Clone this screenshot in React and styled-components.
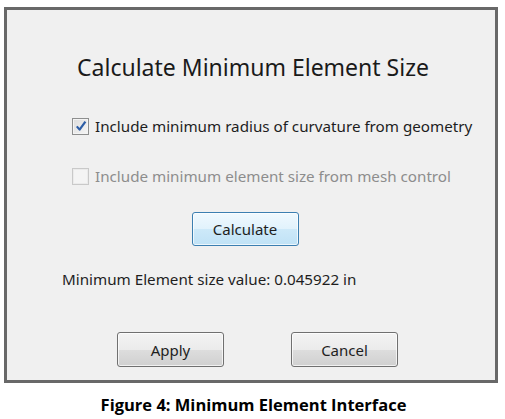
import styled, { createGlobalStyle } from 'styled-components'

const GlobalStyle = createGlobalStyle`
  body {
    margin: 0;
    background: #ffffff;
    font-family: 'Noto Sans', 'Open Sans', sans-serif;
  }
`

const Page = styled.div`
  width: 505px;
  height: 419px;
  display: flex;
  flex-direction: column;
  padding: 7px 0 0 4px;
  box-sizing: border-box;
`

const Panel = styled.div`
  width: 494px;
  height: 376px;
  box-sizing: border-box;
  border: 3px solid #686868;
  background: #f0f0f0;
  display: flex;
  flex-direction: column;
  padding-top: 41px;
`

const Title = styled.div`
  text-align: center;
  font-size: 23px;
  line-height: 32px;
  color: #1a1a1a;
  padding-left: 4px;
  margin-bottom: 33px;
`

const CheckRow = styled.label`
  display: flex;
  align-items: center;
  gap: 6px;
  padding-left: 65px;
  height: 20px;
  margin-bottom: ${(p) => p.gap}px;
  font-size: 15.2px;
  color: ${(p) => (p.disabled ? '#8d8d8d' : '#1e1e1e')};
`

const Box = styled.span`
  width: 17px;
  height: 17px;
  box-sizing: border-box;
  border: 1px solid ${(p) => (p.disabled ? '#c9c9c9' : '#8e8f8f')};
  background: ${(p) =>
    p.disabled
      ? '#f4f4f4'
      : 'linear-gradient(135deg, #dcdcdc, #f6f6f6)'};
  box-shadow: inset 0 0 0 1px ${(p) => (p.disabled ? '#ebebeb' : '#f4f4f4')};
  display: flex;
  align-items: center;
  justify-content: center;
`

const CalcWrap = styled.div`
  display: flex;
  justify-content: center;
  padding-right: 12px;
  margin-bottom: 23px;
`

const Button = styled.button`
  width: ${(p) => p.w}px;
  height: ${(p) => p.h}px;
  border-radius: 3px;
  font-family: 'Noto Sans', 'Open Sans', sans-serif;
  font-size: 15px;
  color: #1e1e1e;
  padding: 0;
  border: 1px solid ${(p) => (p.primary ? '#3c7fb1' : '#707070')};
  background: ${(p) =>
    p.primary
      ? 'linear-gradient(#f0f9fe, #e1f2fc 50%, #cde9f9 51%, #c0e2f6)'
      : 'linear-gradient(#f3f3f3, #ebebeb 50%, #dddddd 51%, #d0d0d0)'};
  box-shadow: inset 0 0 0 1px rgba(255, 255, 255, 0.7);
`

const ValueText = styled.div`
  padding-left: 55px;
  font-size: 15.2px;
  line-height: 20px;
  color: #1e1e1e;
  margin-bottom: 43px;
`

const ButtonRow = styled.div`
  display: flex;
  gap: 67px;
  padding-left: 110px;
`

const Caption = styled.div`
  text-align: center;
  font-family: 'Open Sans', 'Liberation Sans', sans-serif;
  font-weight: 700;
  font-size: 16.5px;
  color: #000;
  margin-top: 10px;
  padding-right: 2px;
`

function Check({ checked, disabled, children, gap }) {
  return (
    <CheckRow disabled={disabled} gap={gap}>
      <Box disabled={disabled}>
        {checked && (
          <svg width="12" height="12" viewBox="0 0 12 12">
            <path d="M1.8 6.4 L4.6 9.6 L10.4 1.6" fill="none" stroke="#2c5da6" strokeWidth="2.2" strokeLinejoin="round" />
          </svg>
        )}
      </Box>
      {children}
    </CheckRow>
  )
}

export default function App() {
  return (
    <Page>
      <GlobalStyle />
      <Panel>
        <Title>Calculate Minimum Element Size</Title>
        <Check checked gap={30}>Include minimum radius of curvature from geometry</Check>
        <Check disabled gap={26}>Include minimum element size from mesh control</Check>
        <CalcWrap>
          <Button primary w={107} h={34}>Calculate</Button>
        </CalcWrap>
        <ValueText>Minimum Element size value: 0.045922 in</ValueText>
        <ButtonRow>
          <Button w={107} h={35}>Apply</Button>
          <Button w={107} h={35}>Cancel</Button>
        </ButtonRow>
      </Panel>
      <Caption>Figure 4: Minimum Element Interface</Caption>
    </Page>
  )
}
